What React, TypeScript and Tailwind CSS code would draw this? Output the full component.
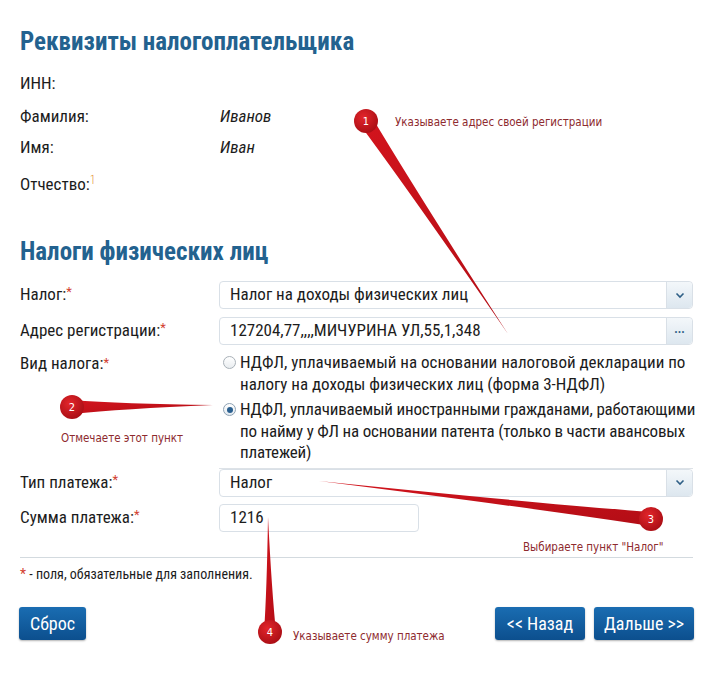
import React from "react";

const font = {
  fontFamily: '"Roboto Condensed", "Open Sans Condensed", "Roboto", sans-serif',
  fontStretch: "condensed",
};

const note = { fontFamily: '"DejaVu Sans Condensed", "DejaVu Sans", sans-serif' };

type Pin = { n: string; cx: number; cy: number; tx: number; ty: number; w: number };

const pins: Pin[] = [
  { n: "1", cx: 366, cy: 121, tx: 508, ty: 334, w: 7 },
  { n: "2", cx: 72, cy: 407, tx: 213, ty: 405, w: 7 },
  { n: "3", cx: 651, cy: 519, tx: 319, ty: 481, w: 7 },
  { n: "4", cx: 270, cy: 632, tx: 268, ty: 517, w: 6 },
];

// хвост-указатель от кружка к цели
function tail(p: Pin) {
  const dx = p.tx - p.cx;
  const dy = p.ty - p.cy;
  const len = Math.hypot(dx, dy);
  const nx = -dy / len;
  const ny = dx / len;
  const ax = p.cx + nx * p.w;
  const ay = p.cy + ny * p.w;
  const bx = p.cx - nx * p.w;
  const by = p.cy - ny * p.w;
  const mx = p.cx + dx * 0.35;
  const my = p.cy + dy * 0.35;
  return `M${ax},${ay} Q${mx + nx * 2.5},${my + ny * 2.5} ${p.tx},${p.ty} Q${mx - nx * 2.5},${my - ny * 2.5} ${bx},${by} Z`;
}

function Req() {
  return <span className="text-[#d2402f] align-top text-[13px]">*</span>;
}

function Chevron() {
  return (
    <div className="w-[26px] self-stretch flex items-center justify-center border-l border-[#d9e0e7] bg-gradient-to-b from-[#f3f7fa] to-[#dde7ef] rounded-r">
      <svg width="10" height="7" viewBox="0 0 10 7">
        <path d="M1.5 1.5 L5 5 L8.5 1.5" fill="none" stroke="#2f5f86" strokeWidth="1.6" />
      </svg>
    </div>
  );
}

function Btn({ children, className = "" }: { children: React.ReactNode; className?: string }) {
  return (
    <button
      className={`h-[33px] rounded-[3px] bg-gradient-to-b from-[#1a6db2] to-[#0c4f8e] text-white text-[18px] shadow-[0_1px_2px_rgba(0,0,0,0.3)] ${className}`}
    >
      {children}
    </button>
  );
}

export default function App() {
  return (
    <div className="relative w-[721px] h-[689px] bg-white text-[#1c1c1c] overflow-hidden" style={font}>
      <div className="px-[20px] pt-[27px]">
        <h1 className="text-[25px] font-bold text-[#23628f] leading-[30px]">Реквизиты налогоплательщика</h1>

        <div className="mt-[11px] text-[17px]">
          <div className="grid grid-cols-[200px_1fr] h-[32px] items-center">
            <span>ИНН:</span>
            <span />
          </div>
          <div className="grid grid-cols-[200px_1fr] h-[34px] items-center">
            <span>Фамилия:</span>
            <span className="italic">Иванов</span>
          </div>
          <div className="grid grid-cols-[200px_1fr] h-[28px] items-center">
            <span>Имя:</span>
            <span className="italic">Иван</span>
          </div>
          <div className="grid grid-cols-[200px_1fr] h-[40px] items-end pb-[5px]">
            <span>
              Отчество:<sup className="text-[#e4953a] text-[12px] font-light">1</sup>
            </span>
            <span />
          </div>
        </div>

        <h2 className="mt-[35px] text-[25px] font-bold text-[#23628f] leading-[30px]">Налоги физических лиц</h2>

        <div className="mt-[14px] text-[17px] flex flex-col">
          <div className="grid grid-cols-[199px_474px] items-center">
            <span>
              Налог:<Req />
            </span>
            <div className="h-[28px] flex items-center border border-[#d9e0e7] rounded bg-white">
              <span className="flex-1 pl-[10px]">Налог на доходы физических лиц</span>
              <Chevron />
            </div>
          </div>

          <div className="grid grid-cols-[199px_474px] items-center mt-[8px]">
            <span>
              Адрес регистрации:<Req />
            </span>
            <div className="h-[28px] flex items-center border border-[#d9e0e7] rounded bg-white">
              <span className="flex-1 pl-[10px]">127204,77,,,,МИЧУРИНА УЛ,55,1,348</span>
              <div className="w-[26px] self-stretch flex items-center justify-center border-l border-[#d9e0e7] bg-gradient-to-b from-[#f3f7fa] to-[#dde7ef] rounded-r text-[#2f5f86] text-[12px] font-bold leading-none pb-[4px]">
                ...
              </div>
            </div>
          </div>

          <div className="grid grid-cols-[199px_474px] items-start mt-[7px]">
            <span className="leading-[22px]">
              Вид налога:<Req />
            </span>
            <div className="flex flex-col gap-[4px] pb-[4px] border-b border-[#dde2e7]">
              <label className="flex items-start leading-[21.5px] whitespace-nowrap">
                <span className="mt-[4px] ml-[4px] mr-[4px] w-[13px] h-[13px] rounded-full border border-[#a9b1b8] bg-gradient-to-b from-white to-[#e9edf0] shrink-0" />
                <span>
                  НДФЛ, уплачиваемый на основании налоговой декларации по
                  <br />
                  налогу на доходы физических лиц (форма 3-НДФЛ)
                </span>
              </label>
              <label className="flex items-start leading-[21.5px] whitespace-nowrap">
                <span className="mt-[4px] ml-[4px] mr-[4px] w-[13px] h-[13px] rounded-full border border-[#8ea2b4] bg-gradient-to-b from-white to-[#e3eaf0] shrink-0 flex items-center justify-center">
                  <span className="w-[6px] h-[6px] rounded-full bg-[#2a5f8f]" />
                </span>
                <span className="tracking-[-0.2px]">
                  НДФЛ, уплачиваемый иностранными гражданами, работающими
                  <br />
                  по найму у ФЛ на основании патента (только в части авансовых
                  <br />
                  платежей)
                </span>
              </label>
            </div>
          </div>

          <div className="grid grid-cols-[199px_474px] items-center">
            <span>
              Тип платежа:<Req />
            </span>
            <div className="h-[28px] flex items-center border border-[#d9e0e7] rounded bg-white">
              <span className="flex-1 pl-[10px]">Налог</span>
              <Chevron />
            </div>
          </div>

          <div className="grid grid-cols-[199px_474px] items-center mt-[7px]">
            <span>
              Сумма платежа:<Req />
            </span>
            <div className="w-[200px] h-[28px] flex items-center border border-[#d9e0e7] rounded bg-white pl-[10px]">1216</div>
          </div>
        </div>

        <div className="mt-[25px] w-[673px] border-t border-[#d3dadf]" />
        <p className="mt-[6px] text-[14px]">
          <span className="text-[#d2402f]">*</span> - поля, обязательные для заполнения.
        </p>

        <div className="mt-[22px] w-[674px] flex items-center">
          <Btn className="w-[67px] -ml-[1px]">Сброс</Btn>
          <div className="flex-1" />
          <Btn className="w-[90px]">&lt;&lt; Назад</Btn>
          <Btn className="w-[100px] ml-[9px]">Дальше &gt;&gt;</Btn>
        </div>
      </div>

      {/* пояснения */}
      <svg className="absolute inset-0 pointer-events-none" width="721" height="689" viewBox="0 0 721 689">
        <defs>
          <radialGradient id="dot" cx="0.4" cy="0.35" r="0.7">
            <stop offset="0" stopColor="#e3262b" />
            <stop offset="1" stopColor="#a80d14" />
          </radialGradient>
          <linearGradient id="tl" x1="0" y1="0" x2="1" y2="1">
            <stop offset="0" stopColor="#d3141d" />
            <stop offset="1" stopColor="#b20d15" />
          </linearGradient>
        </defs>
        {pins.map((p) => (
          <g key={p.n}>
            <path d={tail(p)} fill="url(#tl)" />
            <circle cx={p.cx} cy={p.cy} r="12" fill="url(#dot)" />
            <text x={p.cx} y={p.cy + 4} textAnchor="middle" fontSize="11" fill="#fff" fontFamily="DejaVu Sans, sans-serif">
              {p.n}
            </text>
          </g>
        ))}
      </svg>
      <div className="absolute left-[395px] top-[114px] text-[11.5px] text-[#8e2a2e]" style={note}>
        Указываете адрес своей регистрации
      </div>
      <div className="absolute left-[61px] top-[430px] text-[11.5px] text-[#8e2a2e]" style={note}>
        Отмечаете этот пункт
      </div>
      <div className="absolute left-[523px] top-[539px] text-[11.5px] text-[#8e2a2e]" style={note}>
        Выбираете пункт "Налог"
      </div>
      <div className="absolute left-[293px] top-[628px] text-[11.5px] text-[#8e2a2e]" style={note}>
        Указываете сумму платежа
      </div>
    </div>
  );
}
